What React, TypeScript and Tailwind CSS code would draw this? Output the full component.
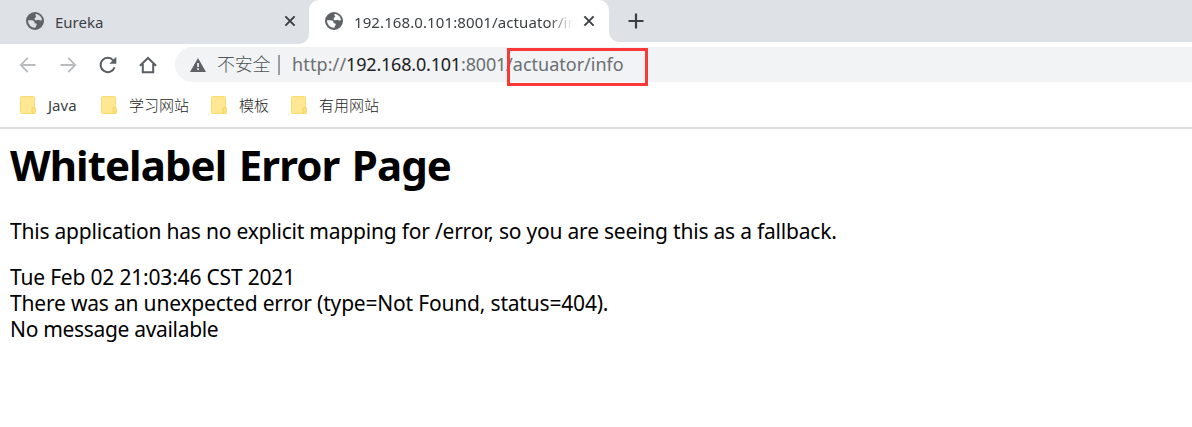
import type { ReactNode } from "react";

function GlobeIcon() {
  return (
    <svg width="18" height="18" viewBox="0 0 18 18" className="shrink-0">
      <path
        fillRule="evenodd"
        fill="#5f6368"
        d="M9 0a9 9 0 1 1 0 18A9 9 0 0 1 9 0zM9.300 2.100C12.600 2 15.600 4.500 15.900 8c-1 .9-2.200.6-3 .1-.9-.6-1.100-.2-2 .1-1.300.3-2.300-.3-2.300-1.500 0-1 1-1.300 1.500-1.700.5-.5-.8-1.300-.8-2.900zM2 8.300h3.800c1.600 0 2.600.9 2.700 2.200.1.9.9 1 1.700 1 .7.100.8.9.3 1.600-.6.8-.5 1.900-1.200 2.700C5.500 16 2 12.800 2 8.300z"
      />
    </svg>
  );
}

function CloseIcon() {
  return (
    <svg width="12" height="12" viewBox="0 0 12 12" className="shrink-0">
      <path d="M1.400 1.400 10.600 10.600M10.600 1.400 1.400 10.600" stroke="#3c4043" strokeWidth="2" fill="none" />
    </svg>
  );
}

function Arrow({ flip = false }: { flip?: boolean }) {
  return (
    <svg width="18" height="18" viewBox="0 0 18 18" className={flip ? "shrink-0 rotate-180" : "shrink-0"}>
      <path d="M16.500 9H1.900M8.800 1.900 1.700 9l7.100 7.100" stroke="#b9bcbf" strokeWidth="1.8" fill="none" />
    </svg>
  );
}

function ReloadIcon() {
  return (
    <svg width="18" height="18" viewBox="0 0 18 18" className="shrink-0">
      <path d="M15.600 11.200A7.200 7.200 0 1 1 14.300 4.300" stroke="#5a5e63" strokeWidth="2" fill="none" />
      <path d="M17.300.8V7.700H10.400Z" fill="#5a5e63" />
    </svg>
  );
}

function HomeIcon() {
  return (
    <svg width="18" height="18" viewBox="0 0 18 18" className="shrink-0">
      <path d="M.9 9.700 9 2l8.100 7.700M3.800 8v8.200h10.400V8" stroke="#5a5e63" strokeWidth="2" fill="none" />
    </svg>
  );
}

function WarningIcon() {
  return (
    <svg width="16" height="14" viewBox="0 0 16 14" className="shrink-0">
      <path d="M8 0 16 14H0Z" fill="#5f6368" />
      <path d="M7.200 5h1.700v4H7.200zM7.200 10.200h1.700v1.700H7.200z" fill="#f1f3f4" />
    </svg>
  );
}

function FolderIcon() {
  return (
    <svg width="16" height="18" viewBox="0 0 16 18" className="shrink-0">
      <path d="M1.500.5h12a1 1 0 0 1 1 1v10.200h-1.300v5.800H1.500a1 1 0 0 1-1-1v-15a1 1 0 0 1 1-1z" fill="#ffe794" stroke="#fbdc6c" />
      <rect x="12" y="11.500" width="3.400" height="6" rx="1.200" fill="#ffe07a" stroke="#f7d257" strokeWidth=".9" />
    </svg>
  );
}

function Bookmark({ children, className }: { children: ReactNode; className: string }) {
  return (
    <div className={`flex shrink-0 items-start gap-[12px] ${className}`}>
      <FolderIcon />
      <span className="-mt-px text-[15px] leading-[20px] whitespace-nowrap">{children}</span>
    </div>
  );
}

export default function App() {
  return (
    <div className="h-[427px] w-full overflow-hidden bg-white font-['Noto_Sans','Noto_Sans_CJK_SC',sans-serif] text-[#3c4043]">
      <header className="flex h-[44px]">
        <div className="flex h-[44px] w-[309px] shrink-0 items-start rounded-br-[10px] bg-[#dee1e6] pt-[12px] pr-[13px] pl-[26px]">
          <GlobeIcon />
          <span className="ml-[11px] flex-1 text-[15px] leading-[20px]">Eureka</span>
          <span className="mt-[3px] flex"><CloseIcon /></span>
        </div>
        <div className="h-[44px] w-[300px] shrink-0 bg-[linear-gradient(to_bottom,#dee1e6_20px,#ffffff_20px)]">
          <div className="flex h-full items-start rounded-t-[10px] bg-white pt-[12px] pl-[16px]">
            <GlobeIcon />
            <span className="ml-[11px] w-[229px] shrink-0 [mask-image:linear-gradient(to_right,black_194px,transparent_219px)] text-[15px] leading-[20px] tracking-[0.1px] whitespace-nowrap">
              192.168.0.101:8001/actuator/in
            </span>
            <span className="mt-[3px] flex"><CloseIcon /></span>
          </div>
        </div>
        <div className="flex h-[42px] flex-1 items-center rounded-bl-[10px] bg-[#dee1e6] pl-[19px]">
          <svg width="16" height="16" viewBox="0 0 16 16">
            <path d="M8 .5v15M.5 8h15" stroke="#3c4043" strokeWidth="2.2" />
          </svg>
        </div>
      </header>

      <div className="flex h-[41px] items-start pt-[3px] pl-[19px]">
        <div className="flex h-[35px] items-center">
          <Arrow />
          <span className="ml-[22px] flex"><Arrow flip /></span>
          <span className="ml-[22px] flex"><ReloadIcon /></span>
          <span className="ml-[22px] flex"><HomeIcon /></span>
        </div>
        <div className="relative ml-[18px] flex h-[35px] flex-1 items-center rounded-l-full bg-[#f1f3f4] pl-[15px] text-[18px] leading-[24px] whitespace-nowrap text-[#6b6f73]">
          <WarningIcon />
          <span className="mb-[2px] ml-[11px] font-light tracking-[-0.3px] text-[#4f5357]">不安全</span>
          <span className="ml-[8px] h-[20px] w-[2px] bg-[#9b9ea1]" />
          <span className="mb-[2px] ml-[12px] w-[54px] tracking-[0.1px]">http://</span>
          <span className="mb-[2px] w-[115px] tracking-[-0.2px] text-[#202124]">192.168.0.101</span>
          <span className="mb-[2px] w-[45px] tracking-[-0.2px]">:8001</span>
          <span className="mb-[2px]">/actuator/info</span>
          <div className="absolute top-[1px] left-[332px] h-[38px] w-[141px] border-[3px] border-[#fb3838]" />
        </div>
      </div>

      <nav className="flex h-[44px] items-start border-b-2 border-[#dadce0] pt-[11px] pl-[20px]">
        <Bookmark className="w-[81px]">Java</Bookmark>
        <Bookmark className="w-[110px] font-light text-[#1c1e20]">学习网站</Bookmark>
        <Bookmark className="w-[80px] font-light text-[#1c1e20]">模板</Bookmark>
        <Bookmark className="font-light text-[#1c1e20]">有用网站</Bookmark>
      </nav>

      <main className="pt-[10px] pl-[10px] text-[21px] leading-[26px] whitespace-nowrap text-black">
        <h1 className="text-[42px] leading-[52px] font-bold tracking-[-0.93px] [word-spacing:2.5px]">Whitelabel Error Page</h1>
        <p className="mt-[27px] tracking-[-0.21px]">
          This application has no explicit mapping for /error, so you are seeing this as a fallback.
        </p>
        <div className="mt-[20px] tracking-[-0.19px]">Tue Feb 02 21:03:46 CST 2021</div>
        <div className="tracking-[-0.19px]">There was an unexpected error (type=Not Found, status=404).</div>
        <div className="tracking-[-0.32px]">No message available</div>
      </main>
    </div>
  );
}
